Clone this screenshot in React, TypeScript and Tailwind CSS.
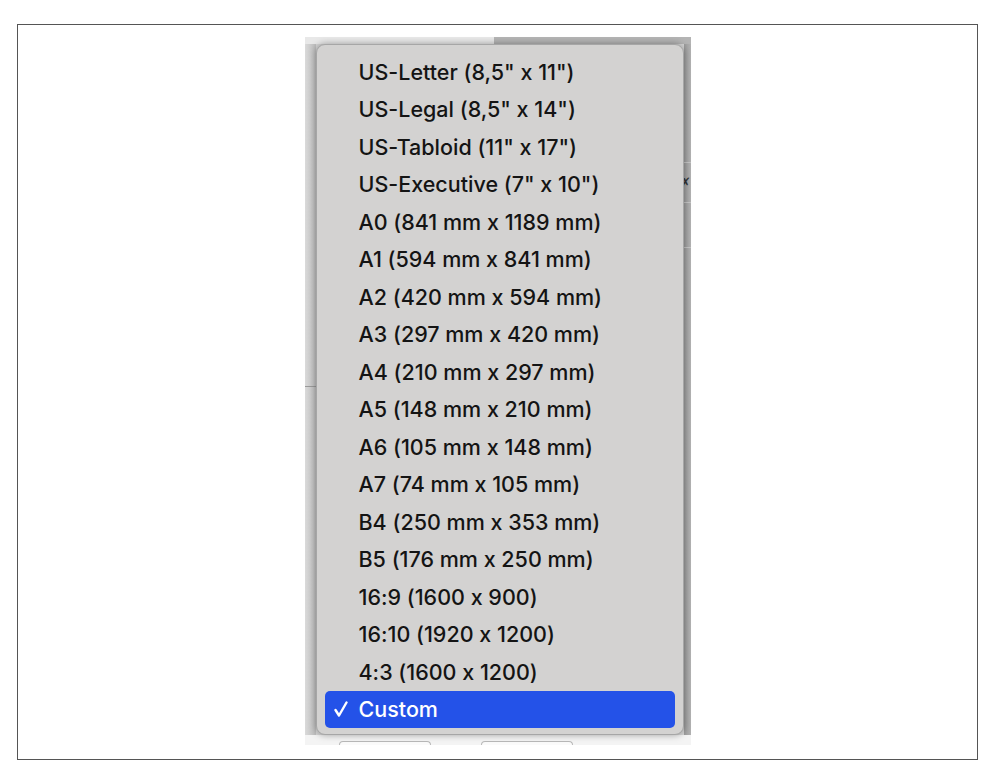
const sizes = [
  'US-Letter (8,5" x 11")',
  'US-Legal (8,5" x 14")',
  'US-Tabloid (11" x 17")',
  'US-Executive (7" x 10")',
  'A0 (841 mm x 1189 mm)',
  'A1 (594 mm x 841 mm)',
  'A2 (420 mm x 594 mm)',
  'A3 (297 mm x 420 mm)',
  'A4 (210 mm x 297 mm)',
  'A5 (148 mm x 210 mm)',
  'A6 (105 mm x 148 mm)',
  'A7 (74 mm x 105 mm)',
  'B4 (250 mm x 353 mm)',
  'B5 (176 mm x 250 mm)',
  '16:9 (1600 x 900)',
  '16:10 (1920 x 1200)',
  '4:3 (1600 x 1200)',
];

function Check() {
  return (
    <svg width="14" height="16" viewBox="0 0 14 16" className="shrink-0">
      <path d="M1.5 9 L5 14.5 L12.5 1.5" fill="none" stroke="white" strokeWidth="2.4" strokeLinecap="round" strokeLinejoin="round" />
    </svg>
  );
}

export default function App() {
  return (
    <div className="min-h-screen bg-white pl-[17px] pt-[24px]">
      <div className="w-[961px] h-[736px] border-[1.5px] border-[#555] flex justify-center pt-[12px]">
        {/* screenshot of the app window with the popup open */}
        <div className="w-[386px] h-[708px] flex flex-col bg-[#d6d6d6]">
          {/* toolbar edge behind the menu */}
          <div className="h-[7px] flex">
            <div className="w-[189px] bg-[#e8e8e8]" />
            <div className="flex-1 bg-[#b4b4b4]" />
          </div>

          <div className="h-[691px] flex">
            {/* left edge of the window behind */}
            <div className="w-[11px] flex flex-col bg-gradient-to-r from-[#dadada] to-[#bcbcbc]">
              <div className="h-[343px] border-b border-[#9a9a9a]" />
            </div>

            {/* popup menu */}
            <div className="relative z-10 w-[368px] rounded-[9px] bg-[#d3d2d1] border border-[#a6a6a6] shadow-[0_0_7px_rgba(0,0,0,0.35)] pt-[8px] px-[8px] font-['Inter','Liberation_Sans',sans-serif] [font-feature-settings:'calt'_0] font-medium text-[21.5px] text-[#141414]">
              {sizes.map((s) => (
                <div key={s} className="h-[37.5px] flex items-center pl-[34px]">
                  {s}
                </div>
              ))}
              <div className="h-[37px] flex items-center gap-[11px] pl-[9px] rounded-[5px] bg-[#2452e8] text-white">
                <Check />
                <span>Custom</span>
              </div>
            </div>

            {/* right edge of the window behind */}
            <div className="w-[7px] flex flex-col bg-gradient-to-l from-[#b2b2b2] to-[#9c9c9c]">
              <div className="h-[119px] border-b border-[#c4c4c4]" />
              <div className="h-[39px] flex items-center justify-end text-[13px] leading-none text-[#333] font-['Liberation_Sans',sans-serif]">✗</div>
              <div className="h-[45px] border-t border-[#c4c4c4]" />
              <div className="h-[38px] border-t border-[#c4c4c4]" />
            </div>
          </div>

          {/* buttons below the menu */}
          <div className="h-[10px] flex items-end gap-[50px] pl-[34px] bg-[#f4f4f4]">
            <div className="w-[92px] h-[4px] rounded-t-[5px] border border-b-0 border-[#b8b8b8] bg-[#fafafa]" />
            <div className="w-[92px] h-[4px] rounded-t-[5px] border border-b-0 border-[#b8b8b8] bg-[#fafafa]" />
          </div>
        </div>
      </div>
    </div>
  );
}
